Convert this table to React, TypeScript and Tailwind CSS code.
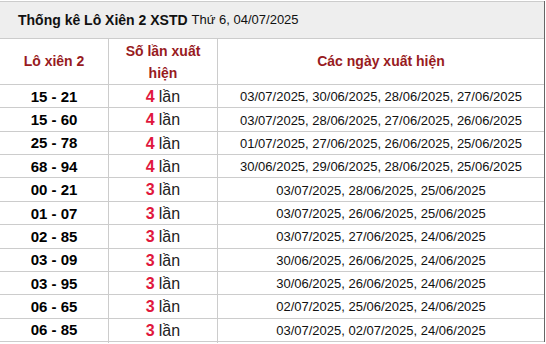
const rows: { pair: string; count: number; dates: string }[] = [
  { pair: '15 - 21', count: 4, dates: '03/07/2025, 30/06/2025, 28/06/2025, 27/06/2025' },
  { pair: '15 - 60', count: 4, dates: '03/07/2025, 28/06/2025, 27/06/2025, 26/06/2025' },
  { pair: '25 - 78', count: 4, dates: '01/07/2025, 27/06/2025, 26/06/2025, 25/06/2025' },
  { pair: '68 - 94', count: 4, dates: '30/06/2025, 29/06/2025, 28/06/2025, 25/06/2025' },
  { pair: '00 - 21', count: 3, dates: '03/07/2025, 28/06/2025, 25/06/2025' },
  { pair: '01 - 07', count: 3, dates: '03/07/2025, 26/06/2025, 25/06/2025' },
  { pair: '02 - 85', count: 3, dates: '03/07/2025, 27/06/2025, 24/06/2025' },
  { pair: '03 - 09', count: 3, dates: '30/06/2025, 26/06/2025, 24/06/2025' },
  { pair: '03 - 95', count: 3, dates: '30/06/2025, 26/06/2025, 24/06/2025' },
  { pair: '06 - 65', count: 3, dates: '02/07/2025, 25/06/2025, 24/06/2025' },
  { pair: '06 - 85', count: 3, dates: '03/07/2025, 02/07/2025, 24/06/2025' },
];

const App = () => {
  return (
    <div className="w-[546px] h-[344px] bg-white overflow-hidden font-['Liberation_Sans',Arial,sans-serif]">
      <div className="mt-px w-[545px] border-r border-[#666666]">
        <div className="h-[38px] bg-[#eeeeee] border-y border-[#cccccc] flex items-center pl-[18px] text-[#111]">
          <span className="text-[14px] font-bold">Thống kê Lô Xiên 2 XSTD</span>
          <span className="text-[13px] ml-[4px]">Thứ 6, 04/07/2025</span>
        </div>
        <div className="grid grid-cols-[109px_109px_1fr] h-[46px] border-b border-[#cccccc] text-[14px] font-bold text-[#981b1e]">
          <div className="border-r border-[#cccccc] flex items-center justify-center">Lô xiên 2</div>
          <div className="border-r border-[#cccccc] flex items-center justify-center text-center leading-[22px] px-2">
            Số lần xuất hiện
          </div>
          <div className="flex items-center justify-center">Các ngày xuất hiện</div>
        </div>
        {rows.map((r) => (
          <div
            key={r.pair}
            className="grid grid-cols-[109px_109px_1fr] h-[23.36px] border-b border-[#cccccc]"
          >
            <div className="border-r border-[#cccccc] flex items-center justify-center text-[15px] font-bold text-black">
              {r.pair}
            </div>
            <div className="border-r border-[#cccccc] flex items-center justify-center text-[16px] text-[#222]">
              <span className="font-bold text-[#e0173d]">{r.count}</span>
              <span className="ml-[4px]">lần</span>
            </div>
            <div className="flex items-center justify-center text-[13px] text-[#111]">{r.dates}</div>
          </div>
        ))}
      </div>
    </div>
  );
};

export default App;
